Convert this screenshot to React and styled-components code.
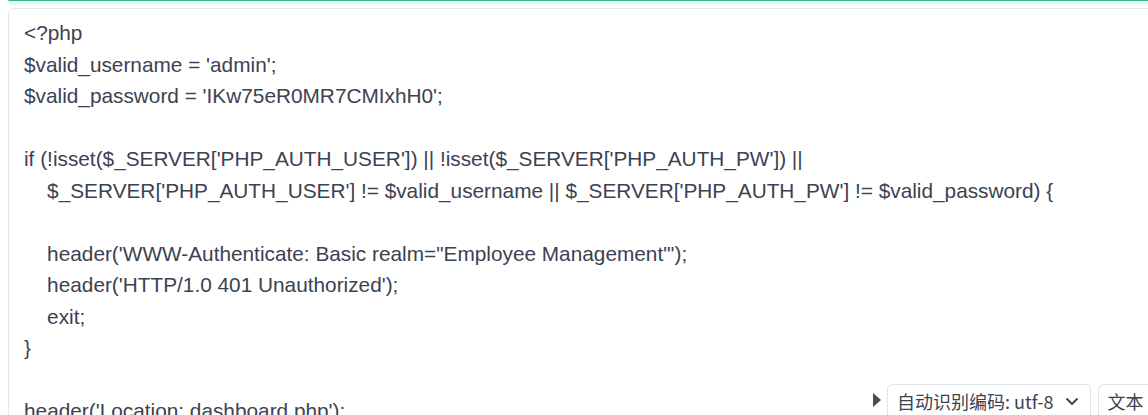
import styled, { createGlobalStyle } from "styled-components";

const Global = createGlobalStyle`
  html, body {
    margin: 0;
    padding: 0;
    background: #ffffff;
    overflow: hidden;
  }
  body {
    font-family: "Liberation Sans", Arial, sans-serif;
    height: 415px;
  }
`;

const code = `<?php
$valid_username = 'admin';
$valid_password = 'IKw75eR0MR7CMIxhH0';

if (!isset($_SERVER['PHP_AUTH_USER']) || !isset($_SERVER['PHP_AUTH_PW']) ||
    $_SERVER['PHP_AUTH_USER'] != $valid_username || $_SERVER['PHP_AUTH_PW'] != $valid_password) {

    header('WWW-Authenticate: Basic realm="Employee Management"');
    header('HTTP/1.0 401 Unauthorized');
    exit;
}

header('Location: dashboard.php');
exit;
?>`;

export default function App() {
  return (
    <>
      <Global />
      <Page>
        <PrevBlock />
        <CodeCard>
          <Code>{code}</Code>
        </CodeCard>
        <Toolbar>
          <Caret viewBox="0 0 10 16">
            <path d="M1 1 L9 8 L1 15 Z" fill="#464d5e" />
          </Caret>
          <Select>
            自动识别编码: utf-8
            <svg width="16" height="16" viewBox="0 0 16 16">
              <path d="M3 6 L8 11 L13 6" fill="none" stroke="#3a4152" strokeWidth="1.8" strokeLinecap="round" strokeLinejoin="round" />
            </svg>
          </Select>
          <Select>文本</Select>
        </Toolbar>
      </Page>
    </>
  );
}

const Page = styled.div`
  position: relative;
  height: 415px;
  overflow: hidden;
`;

const PrevBlock = styled.div`
  height: 4px;
  margin: -1px -20px 0 8px;
  background: #e9f7f3;
  border-top: 2px solid #3bb692;
  border-left: 1px solid #bfe8db;
  border-bottom-left-radius: 5px;
`;

const CodeCard = styled.div`
  margin: 3px -20px 0 8px;
  border: 1px solid #e3e5ea;
  border-radius: 6px;
  padding: 8px 16px 0 15px;
  height: 600px;
`;

const Code = styled.pre`
  margin: 0;
  font-family: "Liberation Sans", Arial, sans-serif;
  font-size: 20.8px;
  line-height: 31.5px;
  color: #3b4252;
  white-space: pre;
`;

const Toolbar = styled.div`
  position: absolute;
  left: 872px;
  top: 384px;
  display: flex;
  align-items: flex-start;
  gap: 7px;
`;

const Caret = styled.svg`
  width: 10px;
  height: 16px;
  margin-top: 8px;
  margin-right: -2px;
`;

const Select = styled.div`
  display: flex;
  align-items: center;
  gap: 10px;
  height: 40px;
  padding: 0 10px 8px 9px;
  box-sizing: border-box;
  border: 1px solid #dfe2e7;
  border-bottom: none;
  border-radius: 6px 6px 0 0;
  background: #ffffff;
  font-family: "Noto Sans CJK SC", "Liberation Sans", sans-serif;
  font-size: 18px;
  color: #3b4252;
  white-space: nowrap;
`;
